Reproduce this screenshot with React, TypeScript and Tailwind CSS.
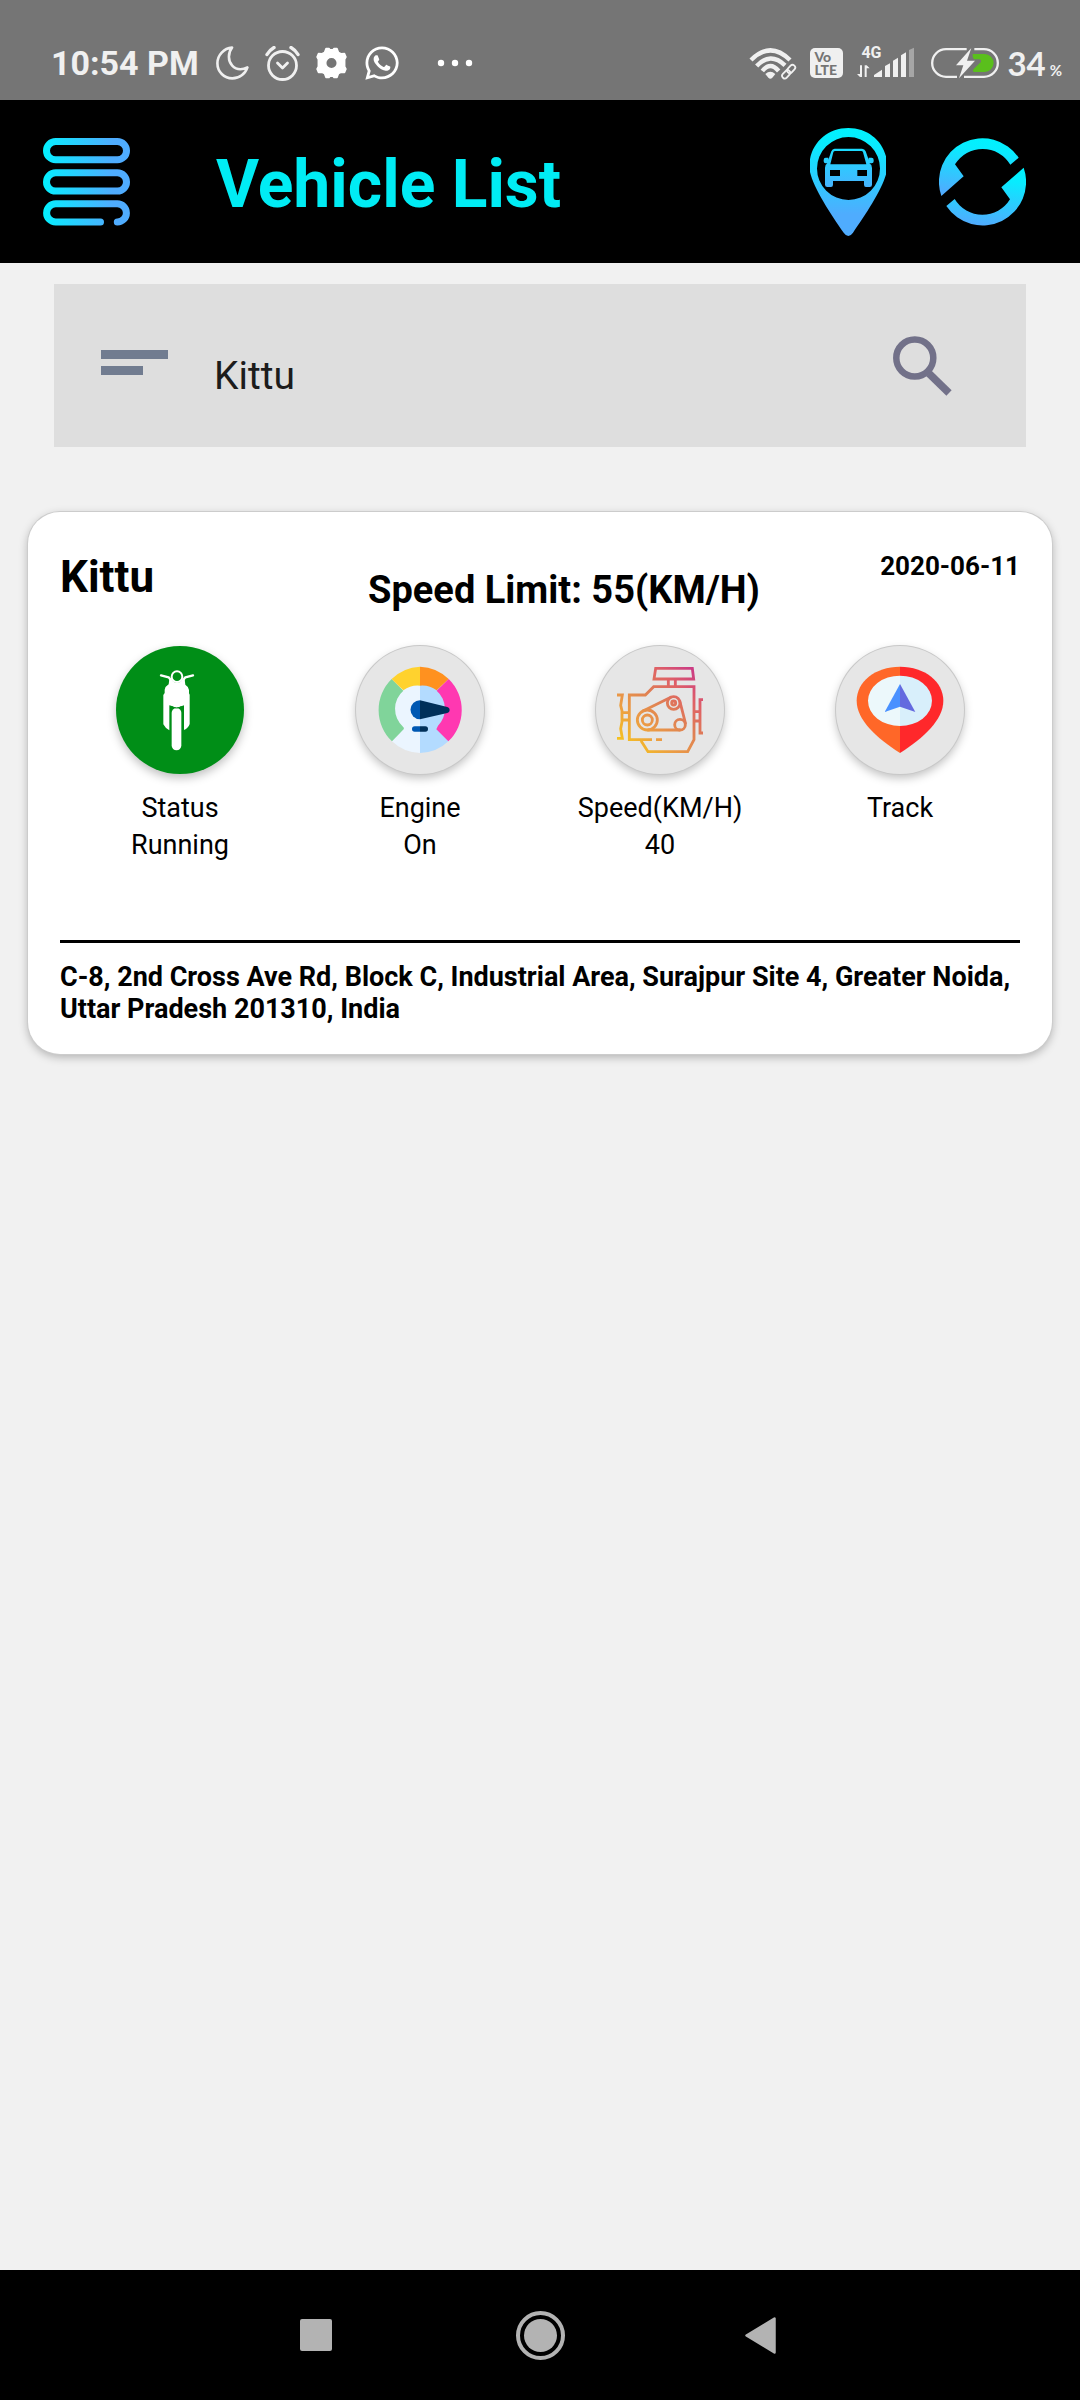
import React, { useState } from "react";
import { FaWhatsapp } from "react-icons/fa";

function MoonIcon() {
  return (
    <svg width="33" height="34" viewBox="0 0 33 34" fill="none" stroke="#f0f0f0" strokeWidth="2.600" strokeLinejoin="round">
      <path d="M16 1.6C8 2.2 1.4 9 1.4 17.2c0 8.5 6.6 15.2 15 15.2 7 0 13-4.600 15-11-2.300 1.200-4.600 1.800-7 1.800-6.500 0-11.500-5.500-11.500-12.500 0-3.500 1.100-6.600 3.100-9.100z" />
    </svg>
  );
}

function AlarmIcon() {
  return (
    <svg width="35" height="35" viewBox="0 0 35 35" fill="none" stroke="#f0f0f0" strokeWidth="2.800" strokeLinecap="round" strokeLinejoin="round">
      <circle cx="17.500" cy="19.500" r="14" />
      <path d="M12.500 17l5 5 5-5" />
      <path d="M2 8.500c1.600-2.800 4-5.200 7-7M33 8.500c-1.600-2.800-4-5.200-7-7" strokeWidth="3.400" />
    </svg>
  );
}

function GearIcon() {
  return (
    <svg width="31" height="32" viewBox="0 0 31 32">
      <path
        fill="#fff"
        fillRule="evenodd"
        stroke="#fff"
        strokeWidth="1.500"
        strokeLinejoin="round"
        d="M10 1.500h3l1 1.200h3l1-1.200h3l1.500 4 2.500 1.200 3.500-.2 1.500 3.500-1.300 2.500v7l1.300 2.500-1.500 3.500-3.500-.2-2.500 1.200-1.500 4h-3l-1-1.200h-3l-1 1.200h-3l-1.500-4L6 25.300l-3.500.2L1 22l1.300-2.500v-7L1 10l1.500-3.500 3.500.2 2.500-1.200zM15.500 10.200a5.800 5.800 0 1 0 0 11.600 5.800 5.800 0 0 0 0-11.600z"
      />
    </svg>
  );
}

function DotsIcon() {
  return (
    <svg width="36" height="8" viewBox="0 0 36 8" fill="#fff">
      <circle cx="4" cy="4" r="3.200" />
      <circle cx="18" cy="4" r="3.200" />
      <circle cx="32" cy="4" r="3.200" />
    </svg>
  );
}

function WifiIcon() {
  return (
    <svg width="48" height="33" viewBox="89 81 144 99" fill="none" stroke="#f0f0f0" strokeWidth="13">
      <path d="M95 120Q153 62 212 120" />
      <path d="M112 138Q153 94 197 136" />
      <path d="M129 153Q153 123 178 153" />
      <path d="M138 162q15-13 30 0l-9 11q-6 6-12 0z" fill="#f0f0f0" stroke="none" />
      <g transform="rotate(-47 208 155)" strokeWidth="5.500">
        <rect x="183" y="147" width="28" height="16" rx="8" />
        <rect x="205" y="147" width="28" height="16" rx="8" />
      </g>
    </svg>
  );
}

function SignalIcon() {
  return (
    <svg width="58" height="32" viewBox="414 81 174 96" fill="#f0f0f0">
      <path d="M423 136h6v35h-6l-9-9h9zM437 171v-35h6l9 9h-9v26z" />
      <path d="M465 165l24-16v22h-24zM498 138l15-8v41h-15zM522 122l15-9v58h-15zM546 106l15-9v74h-15z" />
      <path d="M570 90l15-7v88h-15z" fill="#a6a6a6" />
    </svg>
  );
}

function BatteryIcon() {
  return (
    <svg width="68" height="32" viewBox="633 81 204 96" fill="none">
      <path d="M740 87.500H678a41 41 0 0 0 0 83h33M763 87.500h29a41 41 0 0 1 0 83h-60" stroke="#f0f0f0" strokeWidth="7" />
      <path d="M758 102h36a27 27 0 0 1 0 54h-33q-5-4 0-9l21-20q3-7-4-9h-16q-6-8-4-16z" fill="#5abf1c" />
      <path d="M754 84l-46 52h22l-13 39 48-53h-24z" fill="#f0f0f0" />
    </svg>
  );
}

function MenuIcon() {
  return (
    <svg width="87" height="88" viewBox="0 0 87 88" fill="none" stroke="url(#menuFill)" strokeWidth="7" strokeLinecap="round">
      <defs>
        <linearGradient id="menuFill" gradientUnits="userSpaceOnUse" x1="0" y1="44" x2="87" y2="44">
          <stop offset="0" stopColor="#00f2fe" />
          <stop offset="0.100" stopColor="#0fe6ff" />
          <stop offset="0.800" stopColor="#4facfe" />
          <stop offset="1" stopColor="#4facfe" />
        </linearGradient>
      </defs>
      <rect x="3.500" y="3.500" width="80" height="18.300" rx="9.150" />
      <rect x="3.500" y="34.800" width="80" height="18.300" rx="9.150" />
      <path d="M57.500 84H12.700a9.100 9.100 0 0 1 0-18.200h61.600a9.100 9.100 0 0 1 0 18.200" />
    </svg>
  );
}

function CarPinIcon() {
  return (
    <svg width="76" height="108" viewBox="150 111 228 324">
      <defs>
        <linearGradient id="pinFill" gradientUnits="userSpaceOnUse" x1="264" y1="111" x2="264" y2="435">
          <stop offset="0" stopColor="#00f2fe" />
          <stop offset="0.150" stopColor="#08ecff" />
          <stop offset="0.800" stopColor="#4facfe" />
          <stop offset="1" stopColor="#4facfe" />
        </linearGradient>
        <linearGradient id="carFill" gradientUnits="userSpaceOnUse" x1="264" y1="150" x2="264" y2="310">
          <stop offset="0" stopColor="#12e4ff" />
          <stop offset="1" stopColor="#4facfe" />
        </linearGradient>
      </defs>
      <path
        fill="url(#pinFill)"
        fillRule="evenodd"
        d="M265 111c66 0 117 50 117 116 0 44-60 137-103 198q-14 20-28 0c-43-61-103-154-103-198 0-66 51-116 117-116zM265.500 138a94.500 94.500 0 1 0 0 189 94.500 94.500 0 0 0 0-189z"
      />
      <path
        fill="url(#carFill)"
        fillRule="evenodd"
        d="M224 173h82q8 0 11 8l9 25v-6h9q6 0 6 7v4q0 6-6 6h-7q8 4 8 14v50q0 7-7 7h-11q-6 0-6-7v-11h-93v11q0 7-6 7h-11q-7 0-7-7v-50q0-10 7-14h-5q-6 0-6-6v-4q0-7 6-7h8v6l9-25q3-8 10-8zM226 180q-5 0-6 4l-9 36h108l-10-36q-1-4-5-4zM210 237v18h30v-18zM292 237v18h29v-18z"
      />
    </svg>
  );
}

function RefreshIcon() {
  return (
    <svg width="87" height="88" viewBox="537 143 261 264">
      <defs>
        <linearGradient id="refreshTop" gradientUnits="userSpaceOnUse" x1="660" y1="143" x2="640" y2="315">
          <stop offset="0" stopColor="#00f2fe" />
          <stop offset="0.200" stopColor="#08ecff" />
          <stop offset="1" stopColor="#4facfe" />
        </linearGradient>
        <linearGradient id="refreshBottom" gradientUnits="userSpaceOnUse" x1="700" y1="232" x2="680" y2="405">
          <stop offset="0" stopColor="#00f2fe" />
          <stop offset="0.200" stopColor="#08ecff" />
          <stop offset="1" stopColor="#4facfe" />
        </linearGradient>
      </defs>
      <path fill="url(#refreshTop)" d="M776 202A130.500 130.500 0 0 0 544 317L611 258L585 222A97 97 0 0 1 751 223Z" />
      <path fill="url(#refreshBottom)" d="M559 347A130.500 130.500 0 0 0 791 232L724 291L750 327A97 97 0 0 1 584 326Z" />
    </svg>
  );
}

function FilterIcon() {
  return (
    <svg width="67" height="27" viewBox="0 0 67 27" fill="#717c90">
      <rect width="67" height="9" y="1" />
      <rect width="42" height="9" y="17" />
    </svg>
  );
}

function SearchIcon() {
  return (
    <svg width="60" height="60" viewBox="0 0 60 60" fill="none" stroke="#727189">
      <circle cx="21.800" cy="22" r="18.500" strokeWidth="6.500" />
      <path d="M36 37.500L56 57" strokeWidth="7.500" />
    </svg>
  );
}

function BikeIcon() {
  return (
    <svg width="128" height="128" viewBox="48 47 384 384" fill="none">
      <circle cx="231" cy="139" r="16" stroke="#fff" strokeWidth="6" />
      <path d="M183 135l23 6 8 10M279 135l-23 6-8 10" stroke="#fff" strokeWidth="7" strokeLinecap="round" strokeLinejoin="round" />
      <path
        fill="#fff"
        d="M208 147q6-2 9 4 14 14 28 0 3-6 9-4l2 16q10 6 11 16v10l2 4v88q-4 12-17 18V225q-8 4-10 3-12 8-24 0l-10-3v75q-12-6-18-18v-88l4-6v-10q2-10 12-16z"
      />
      <rect x="215" y="233" width="29" height="127" rx="14.500" fill="#fff" />
      <path d="M213 228q16 10 34 0" stroke="#008e17" strokeWidth="3" />
    </svg>
  );
}

function GaugeIcon() {
  return (
    <svg width="128" height="128" viewBox="48 48 384 384">
      <path fill="#ebf5ff" d="M240 148A92 92 0 0 0 175 305L155 333A129 129 0 0 0 240 369Z" />
      <path fill="#b3dbff" d="M240 148A92 92 0 0 1 305 305L326 333A129 129 0 0 1 240 369Z" />
      <path fill="#80d49a" d="M155 147A130 130 0 0 0 156 334L191 298A6 6 0 0 0 189 290A72 72 0 0 1 190 182Z" />
      <path fill="#ffd22e" d="M240 110A129 129 0 0 0 155 147L190 181A72 72 0 0 1 240 167Z" />
      <path fill="#ff911f" d="M240 110A129 129 0 0 1 326 147L290 181A72 72 0 0 0 240 167Z" />
      <path fill="#ff38b1" d="M326 147A130 130 0 0 1 325 334L289 298L294 287A72 72 0 0 0 290 182Z" />
      <path fill="#0058b3" d="M240 211a28.500 28.500 0 1 0 0 57z" />
      <path fill="#00305a" d="M240 211l82 20q7 2 7 9t-7 9l-82 19z" />
      <path fill="#0058b3" d="M240 289h-16a8 8 0 0 0 0 16h16z" />
      <path fill="#00305a" d="M240 289h16a8 8 0 0 1 0 16h-16z" />
    </svg>
  );
}

function EngineIcon() {
  return (
    <svg width="128" height="128" viewBox="78 48 384 384" fill="none" stroke="url(#engineFill)" strokeWidth="8.500">
      <defs>
        <linearGradient id="engineFill" gradientUnits="userSpaceOnUse" x1="165" y1="355" x2="375" y2="125">
          <stop offset="0" stopColor="#f6c51d" />
          <stop offset="0.300" stopColor="#eb9b45" />
          <stop offset="0.550" stopColor="#df8054" />
          <stop offset="0.780" stopColor="#df6066" />
          <stop offset="1" stopColor="#cb3c84" />
        </linearGradient>
      </defs>
      <path d="M257 115H367L371 147H252ZM295 147V170M316 147V170" />
      <path d="M246 329H178V195H226L251 170H372V329L353 365H234L213 332M258 329H276" />
      <path d="M141 195H157L152 226L156 243V275L152 296L157 325H141M156 248H178M156 270H178" />
      <path d="M399 209H390V309H399M372 245H390M372 273H390" />
      <circle cx="232" cy="270" r="30" />
      <circle cx="232" cy="270" r="15" />
      <circle cx="311" cy="219" r="19" />
      <circle cx="311" cy="219" r="6" />
      <circle cx="330" cy="284" r="16" />
      <path d="M219 243L304 201M232 300H331M329 212L347 282" />
    </svg>
  );
}

function TrackIcon() {
  return (
    <svg width="128" height="128" viewBox="48 48 384 384">
      <path fill="#ff6728" d="M240 110C164 110 110 156 110 212C110 270 170 324 240 369Z" />
      <path fill="#ff282b" d="M240 110C316 110 370 156 370 212C370 270 310 324 240 369Z" />
      <path fill="#ecf8fb" d="M240 137a96 75.500 0 0 0 0 151z" />
      <path fill="#d8effb" d="M240 137a96 75.500 0 0 1 0 151z" />
      <path fill="#4991ff" d="M240 162l-46 84 46-16z" />
      <path fill="#6469df" d="M240 162l46 84-46-16z" />
    </svg>
  );
}

type Stat = { label: string; value?: string; active?: boolean; icon: React.ReactNode };

const stats: Stat[] = [
  { label: "Status", value: "Running", active: true, icon: <BikeIcon /> },
  { label: "Engine", value: "On", icon: <GaugeIcon /> },
  { label: "Speed(KM/H)", value: "40", icon: <EngineIcon /> },
  { label: "Track", icon: <TrackIcon /> },
];

function StatusBar() {
  return (
    <div className="flex h-[100px] items-center bg-[#757575] pt-[26px] pr-[18px] pl-[51px] text-[#f0f0f0]">
      <span className="text-[34px] leading-10 font-bold">10:54 PM</span>
      <div className="ml-[17px] flex items-center gap-4">
        <MoonIcon />
        <AlarmIcon />
        <GearIcon />
        <FaWhatsapp size={38} color="#fff" />
      </div>
      <div className="ml-9">
        <DotsIcon />
      </div>
      <div className="ml-auto flex items-center">
        <WifiIcon />
        <div className="ml-[13px] flex h-[30px] w-[33px] flex-col justify-center rounded-[5px] bg-[#f0f0f0] pl-1 font-['Lato'] text-[14px] leading-[13px] font-black text-[#757575]">
          <span>Vo</span>
          <span>LTE</span>
        </div>
        <div className="relative ml-[14px]">
          <SignalIcon />
          <span className="absolute -top-0.5 left-1 text-[16px] leading-4 font-bold">4G</span>
        </div>
        <div className="ml-4">
          <BatteryIcon />
        </div>
        <div className="ml-2 flex items-baseline gap-1 font-['Lato'] font-bold">
          <span className="text-[33px] leading-10">34</span>
          <span className="text-[15px]">%</span>
        </div>
      </div>
    </div>
  );
}

export default function App() {
  const [query, setQuery] = useState("Kittu");

  return (
    <div className="flex min-h-screen flex-col bg-[#f1f1f1] font-['Roboto',sans-serif] text-black">
      <StatusBar />

      <header className="flex h-[163px] items-center bg-black pr-[54px] pl-[43px]">
        <button type="button" aria-label="Menu">
          <MenuIcon />
        </button>
        <h1 className="ml-[86px] pt-1.5 text-[66px] leading-[78px] font-bold text-[#00ecf4]">Vehicle List</h1>
        <div className="ml-auto flex items-center gap-[53px]">
          <button type="button" aria-label="Vehicles on map">
            <CarPinIcon />
          </button>
          <button type="button" aria-label="Refresh">
            <RefreshIcon />
          </button>
        </div>
      </header>

      <main className="flex-1">
        <form
          className="mx-[54px] mt-[21px] flex h-[163px] items-center bg-[#dedede] pr-[73px] pl-[47px]"
          onSubmit={(event) => event.preventDefault()}
        >
          <div className="pb-1.5">
            <FilterIcon />
          </div>
          <input
            type="text"
            aria-label="Search vehicles"
            value={query}
            onChange={(event) => setQuery(event.target.value)}
            className="ml-[46px] min-w-0 flex-1 bg-transparent pt-5 text-[39px] leading-[46px] text-[#1c1c1c] outline-none"
          />
          <button type="submit" aria-label="Search">
            <SearchIcon />
          </button>
        </form>

        <section className="mx-7 mt-[65px] rounded-[32px] bg-white px-8 pt-[38px] pb-[29px] shadow-[0_0_0_1px_#cccccc,0_3px_10px_rgba(0,0,0,0.28)]">
          <div className="grid grid-cols-[1fr_auto_1fr] items-start">
            <h2 className="mt-px text-[44px] leading-[52px] font-bold">Kittu</h2>
            <p className="mt-[18px] pl-12 text-[38px] leading-[44px] font-bold">Speed Limit: 55(KM/H)</p>
            <time dateTime="2020-06-11" className="text-right text-[26px] leading-8 font-bold">
              2020-06-11
            </time>
          </div>

          <div className="mt-[34px] grid grid-cols-4">
            {stats.map((stat) => (
              <div key={stat.label} className="flex flex-col items-center text-[27px] leading-[37px]">
                <button
                  type="button"
                  aria-label={stat.label}
                  className={
                    stat.active
                      ? "mb-4 size-32 rounded-full bg-[#008e17] shadow-[0_4px_10px_rgba(0,0,0,0.25)]"
                      : "mb-4 size-32 rounded-full bg-[#e6e6e6] shadow-[0_0_0_1px_#c8c8c8,0_4px_10px_rgba(0,0,0,0.25)]"
                  }
                >
                  {stat.icon}
                </button>
                <span>{stat.label}</span>
                {stat.value && <span>{stat.value}</span>}
              </div>
            ))}
          </div>

          <hr className="mt-[76px] border-t-[3px] border-black" />
          <address className="mt-[18px] text-[27px] leading-8 font-bold not-italic">
            C-8, 2nd Cross Ave Rd, Block C, Industrial Area, Surajpur Site 4, Greater Noida, Uttar Pradesh 201310, India
          </address>
        </section>
      </main>

      <nav className="grid h-[130px] grid-cols-[1fr_49px_1fr] items-center bg-black">
        <button type="button" aria-label="Recent apps" className="mr-[184px] justify-self-end">
          <svg width="32" height="32" viewBox="0 0 32 32">
            <rect width="32" height="32" rx="2" fill="#b3b3b3" />
          </svg>
        </button>
        <button type="button" aria-label="Home">
          <svg width="49" height="49" viewBox="0 0 49 49">
            <circle cx="24.500" cy="24.500" r="22.500" fill="none" stroke="#b3b3b3" strokeWidth="4" />
            <circle cx="24.500" cy="24.500" r="16.500" fill="#b3b3b3" />
          </svg>
        </button>
        <button type="button" aria-label="Back" className="ml-[180px] justify-self-start">
          <svg width="31" height="37" viewBox="0 0 31 37">
            <path d="M29.500 1.500v34L1.500 18.500z" fill="#b3b3b3" stroke="#b3b3b3" strokeWidth="2.500" strokeLinejoin="round" />
          </svg>
        </button>
      </nav>
    </div>
  );
}
